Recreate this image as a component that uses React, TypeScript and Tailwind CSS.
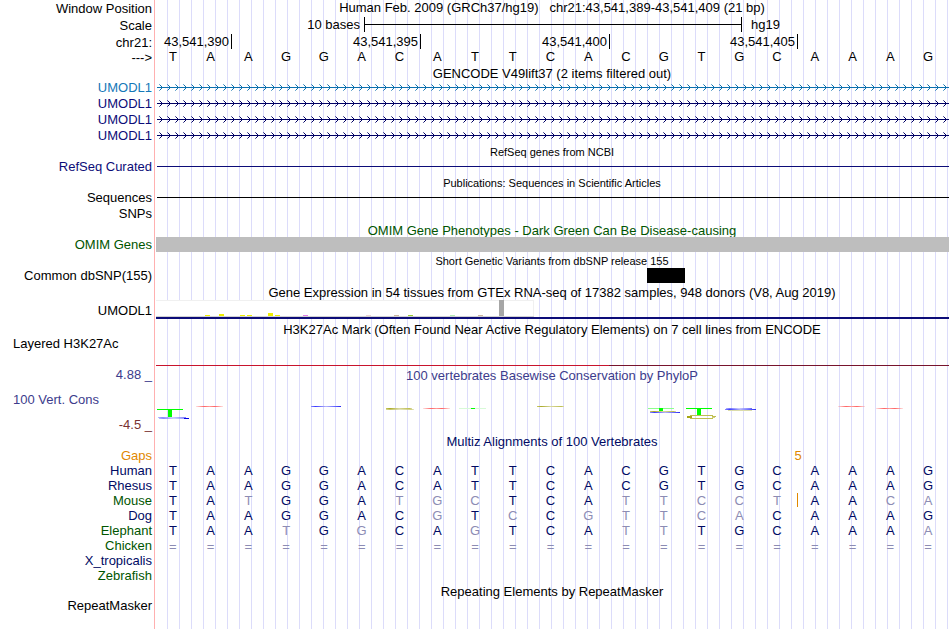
import React from 'react';

interface RowProps {
  label?: string;
  labelClass?: string;
  className?: string;
  children?: React.ReactNode;
}

interface Species {
  name: string;
  color: string;
  bases: string;
}

const REFERENCE = 'TAAGGACATTCACGTGCAAAG';

const NAVY = 'text-[#000a64]';
const GREEN = 'text-[#005500]';

const species: Species[] = [
  { name: 'Human', color: NAVY, bases: REFERENCE },
  { name: 'Rhesus', color: NAVY, bases: REFERENCE },
  { name: 'Mouse', color: GREEN, bases: 'TATGGATGCTCATTCCTAACA' },
  { name: 'Dog', color: NAVY, bases: 'TAAGGACGTCCGTTCACAAAG' },
  { name: 'Elephant', color: GREEN, bases: 'TAATGGCAGTCATTTGCAAAA' },
  { name: 'Chicken', color: GREEN, bases: '=====================' },
  { name: 'X_tropicalis', color: NAVY, bases: '' },
  { name: 'Zebrafish', color: GREEN, bases: '' },
];

const transcripts = [
  { id: 'tx1', stroke: '#0c70ae', text: 'text-[#1478b8]' },
  { id: 'tx2', stroke: '#000064', text: 'text-[#0c0c78]' },
  { id: 'tx3', stroke: '#000064', text: 'text-[#0c0c78]' },
  { id: 'tx4', stroke: '#000064', text: 'text-[#0c0c78]' },
];

// slot = tissue position, h = bar height
const tissues = [
  { slot: 7, h: 1, fill: '#eeee00' },
  { slot: 9, h: 2, fill: '#eeee00' },
  { slot: 12, h: 1, fill: '#eeee00' },
  { slot: 13, h: 1, fill: '#eeee00' },
  { slot: 16, h: 3, fill: '#eeee00' },
  { slot: 17, h: 1, fill: '#eeee00' },
  { slot: 21, h: 1, fill: '#e080e8' },
  { slot: 30, h: 1, fill: '#eed5d2' },
  { slot: 34, h: 1, fill: '#cdb79e' },
  { slot: 36, h: 1, fill: '#9acd32' },
  { slot: 42, h: 1, fill: '#b4eeb4' },
  { slot: 46, h: 1, fill: '#cdb79e' },
  { slot: 49, h: 16, fill: '#a6a6a6' },
];

const Row = ({ label, labelClass = '', className = '', children }: RowProps) => (
  <div className={`flex ${className}`}>
    <div className={`w-[154px] shrink-0 pr-[2px] text-right ${labelClass}`}>{label}</div>
    <div className="min-w-0 flex-1">{children}</div>
  </div>
);

const Title = ({ className = 'h-4 leading-[12px]', children }: { className?: string; children: React.ReactNode }) => (
  <div className={`ml-[154px] flex items-end justify-center whitespace-pre ${className}`}>
    <h2>{children}</h2>
  </div>
);

const Transcript = ({ id, stroke }: { id: string; stroke: string }) => (
  <svg className="h-4 w-full pr-px" shapeRendering="crispEdges" aria-hidden="true">
    <defs>
      <pattern id={id} x="1" y="0" width="8" height="16" patternUnits="userSpaceOnUse">
        <g fill={stroke}>
          <rect x="0" y="7" width="8" height="1" />
          <rect x="6" y="6" width="1" height="1" />
          <rect x="6" y="8" width="1" height="1" />
          <rect x="5" y="5" width="1" height="1" />
          <rect x="5" y="9" width="1" height="1" />
          <rect x="4" y="4" width="1" height="1" opacity="0.6" />
          <rect x="4" y="10" width="1" height="1" opacity="0.6" />
        </g>
      </pattern>
    </defs>
    <rect x="3" y="0" width="100%" height="16" fill={`url(#${id})`} />
  </svg>
);

const Expression = () => (
  <svg className="block h-[17px] w-[380px]" shapeRendering="crispEdges" aria-hidden="true">
    <rect x="2" y="0" width="378" height="17" fill="#f0f0f0" />
    <rect x="2" y="1" width="377" height="15" fill="#fff" />
    <rect x="2" y="16" width="378" height="1" fill="#d2d2d2" />
    {tissues.map((t) => (
      <rect key={t.slot} x={2 + t.slot * 7} y={16 - t.h} width="5" height={t.h} fill={t.fill} />
    ))}
  </svg>
);

// Squashed sequence logo of the PhyloP scores
const Conservation = () => (
  <svg className="block h-[51px] w-full" viewBox="154 382 796 51" preserveAspectRatio="none" aria-hidden="true">
    <defs>
      <linearGradient id="redFade">
        <stop offset="0" stopColor="#ff6464" stopOpacity="0.2" />
        <stop offset="0.3" stopColor="#ff6464" />
        <stop offset="0.5" stopColor="#ff9c9c" />
        <stop offset="0.7" stopColor="#ff6464" />
        <stop offset="1" stopColor="#ff6464" stopOpacity="0.2" />
      </linearGradient>
      <linearGradient id="blueFade">
        <stop offset="0" stopColor="#8c8cff" />
        <stop offset="0.15" stopColor="#3c3cff" />
        <stop offset="0.5" stopColor="#b4b4fa" />
        <stop offset="0.8" stopColor="#6464ff" />
        <stop offset="1" stopColor="#2828f0" />
      </linearGradient>
      <linearGradient id="oliveFade">
        <stop offset="0" stopColor="#c8c864" />
        <stop offset="0.15" stopColor="#aaaa28" />
        <stop offset="0.5" stopColor="#d8d8a0" />
        <stop offset="0.9" stopColor="#bebe50" />
        <stop offset="1" stopColor="#dcdcaa" />
      </linearGradient>
    </defs>
    <g shapeRendering="crispEdges">
      <rect x="157" y="409" width="26" height="1" fill="#00ff00" />
      <rect x="168" y="409" width="4" height="8" fill="#00ff00" />
      <rect x="158" y="417" width="28" height="1" fill="url(#blueFade)" opacity="0.6" />
      <rect x="159" y="418" width="30" height="1" fill="url(#blueFade)" opacity="0.6" />
      <rect x="184" y="418" width="5" height="1" fill="#0000e6" />

      <rect x="196" y="406" width="27" height="1" fill="url(#redFade)" />
      <rect x="311" y="406" width="30" height="1" fill="url(#blueFade)" />
      <rect x="386" y="408" width="26" height="1" fill="url(#oliveFade)" />
      <rect x="386" y="409" width="28" height="1" fill="url(#oliveFade)" opacity="0.7" />
      <rect x="423" y="408" width="27" height="1" fill="url(#redFade)" />
      <rect x="459" y="408" width="27" height="1" fill="#d7fad7" />
      <rect x="471" y="408" width="4" height="1" fill="#00ff00" />
      <rect x="537" y="406" width="27" height="1" fill="url(#oliveFade)" />

      <rect x="648" y="408" width="26" height="1" fill="#8cff8c" />
      <rect x="659" y="408" width="4" height="3" fill="#00ff00" />
      <rect x="650" y="411" width="26" height="1" fill="url(#oliveFade)" />
      <rect x="650" y="412" width="30" height="1" fill="url(#blueFade)" />

      <rect x="686" y="408" width="26" height="1" fill="#00ff00" />
      <rect x="697" y="408" width="4" height="7" fill="#00ff00" />
      <rect x="690" y="415" width="23" height="1" fill="#bebe50" />
      <rect x="687" y="416" width="5" height="2" fill="#a5a514" />
      <rect x="712" y="416" width="4" height="1" fill="#bebe50" />
      <rect x="712" y="417" width="3" height="1" fill="#d2d278" />
      <rect x="690" y="418" width="23" height="1" fill="#bebe50" />

      <rect x="726" y="408" width="26" height="1" fill="url(#blueFade)" opacity="0.7" />
      <rect x="725" y="409" width="31" height="1" fill="url(#blueFade)" />
      <rect x="728" y="410" width="24" height="1" fill="#dcdcaa" />
      <rect x="838" y="406" width="27" height="1" fill="url(#redFade)" />
      <rect x="876" y="408" width="27" height="1" fill="url(#redFade)" />
    </g>
  </svg>
);

const App: React.FC = () => (
  <main className="min-h-screen bg-white bg-[image:linear-gradient(to_right,transparent_154px,#ffb0b0_154px,#ffb0b0_155px,transparent_155px),repeating-linear-gradient(to_right,transparent_0px,transparent_11px,#dcdcfa_11px,#dcdcfa_12px)] bg-[position:0_0,156px_0] bg-no-repeat font-['Liberation_Sans',Arial,sans-serif] text-[13px] leading-[15px] text-black">
    {/* Position and scale */}
    <Row label="Window Position" labelClass="pt-px" className="h-4">
      <h1 className="text-center whitespace-pre">
        Human Feb. 2009 (GRCh37/hg19)   chr21:43,541,389-43,541,409 (21 bp)
      </h1>
    </Row>
    <Row label="Scale" labelClass="pt-[2px]" className="h-[17px]">
      <div className="grid grid-cols-[210fr_378fr_208fr] pt-px">
        <span className="pr-1 text-right">10 bases</span>
        <span className="flex items-center border-x border-black">
          <span className="h-px w-full bg-black" />
        </span>
        <span className="pl-[9px]">hg19</span>
      </div>
    </Row>
    <Row label="chr21:" labelClass="pt-[2px]" className="h-4">
      <div className="grid grid-cols-[78fr_189fr_189fr_188fr_152fr] pt-px text-right">
        {['43,541,390', '43,541,395', '43,541,400', '43,541,405'].map((pos) => (
          <span key={pos} className="border-r border-black pr-[2px]">{pos}</span>
        ))}
      </div>
    </Row>
    <Row label="--->" labelClass="pt-px" className="h-[15px]">
      <div className="grid grid-cols-[repeat(21,1fr)] pr-[3px] text-center">
        {REFERENCE.split('').map((base, i) => (
          <span key={i}>{base}</span>
        ))}
      </div>
    </Row>

    {/* Genes */}
    <Title>GENCODE V49lift37 (2 items filtered out)</Title>
    {transcripts.map((t) => (
      <Row key={t.id} label="UMODL1" labelClass={t.text} className="h-4">
        <Transcript id={t.id} stroke={t.stroke} />
      </Row>
    ))}
    <Title className="h-[15px] text-[11px] leading-[14px]">RefSeq genes from NCBI</Title>
    <Row label="RefSeq Curated" labelClass="text-[#0c0c78]" className="h-[15px]">
      <div className="mt-[7px] mr-px ml-[3px] h-px bg-[#0c0c78]" />
    </Row>

    {/* Literature and phenotypes */}
    <Title className="h-4 text-[11px] leading-[14px]">Publications: Sequences in Scientific Articles</Title>
    <Row label="Sequences" className="h-[15px]">
      <div className="mt-[7px] mr-px ml-[3px] h-px bg-black" />
    </Row>
    <Row label="SNPs" labelClass="pt-px" className="h-4" />
    <Title className={`h-4 leading-[12px] ${GREEN}`}>
      OMIM Gene Phenotypes - Dark Green Can Be Disease-causing
    </Title>
    <Row label="OMIM Genes" labelClass={GREEN} className="h-[15px]">
      <div className="relative mr-px ml-[2px] h-[15px] bg-[#bebebe]" />
    </Row>

    {/* Variants */}
    <Title className="h-4 text-[11px] leading-[14px]">Short Genetic Variants from dbSNP release 155</Title>
    <Row label="Common dbSNP(155)" className="h-[15px]">
      <div className="grid h-[15px] grid-cols-[493fr_38fr_265fr]">
        <span className="col-start-2 bg-black" />
      </div>
    </Row>

    {/* Expression and regulation */}
    <Title className="h-[17px] leading-[14px]">
      Gene Expression in 54 tissues from GTEx RNA-seq of 17382 samples, 948 donors (V8, Aug 2019)
    </Title>
    <Row label="UMODL1" labelClass="pt-[3px]" className="h-[19px]">
      <Expression />
      <div className="mr-px ml-[2px] h-[2px] bg-[#0c0c78]" />
    </Row>
    <Title className="h-[17px] leading-[12px]">
      H3K27Ac Mark (Often Found Near Active Regulatory Elements) on 7 cell lines from ENCODE
    </Title>
    <div className="flex h-[30px]">
      <div className="w-[154px] shrink-0 pl-[13px]">Layered H3K27Ac</div>
      <div className="mr-px ml-[2px] grid h-px flex-1 grid-cols-[453fr_340fr] self-end">
        <span className="bg-[#c8142d]" />
        <span className="bg-[#78142d]" />
      </div>
    </div>

    {/* Conservation */}
    <div className="flex h-[66px]">
      <div className="flex w-[154px] shrink-0 flex-col justify-between pt-px pr-[2px] text-right">
        <span className="text-[#3c3c8c]">4.88 _</span>
        <span className="pl-[13px] text-left text-[#3c3c8c]">100 Vert. Cons</span>
        <span className="text-[#783232]">-4.5 _</span>
      </div>
      <div className="min-w-0 flex-1">
        <h2 className="h-4 pt-[2px] text-center leading-4 text-[#3c3c8c]">
          100 vertebrates Basewise Conservation by PhyloP
        </h2>
        <Conservation />
      </div>
    </div>

    {/* Alignments */}
    <Title className={`h-4 leading-[12px] ${NAVY}`}>Multiz Alignments of 100 Vertebrates</Title>
    <Row label="Gaps" labelClass="text-[#e18700]" className="h-[15px]">
      <div className="grid grid-cols-[636fr_16fr_144fr] text-center text-[#e18700]">
        <span className="col-start-2">5</span>
      </div>
    </Row>
    <table className="block w-full">
      <tbody className="block">
        {species.map((s) => (
          <tr key={s.name} className="relative grid h-[15px] grid-cols-[154px_repeat(21,1fr)_3px]">
            <th scope="row" className={`pr-[2px] text-right font-normal ${s.color}`}>
              {s.name}
            </th>
            {s.bases.split('').map((base, i) => (
              <td
                key={i}
                className={`text-center ${base === REFERENCE[i] ? NAVY : 'text-[#8c8cb4]'} ${base === '=' ? 'pt-px' : ''}`}
              >
                {base}
                {s.name === 'Mouse' && i === 16 && (
                  <span className="absolute top-0 h-[14px] w-px translate-x-[16px] bg-[#e18700]" />
                )}
              </td>
            ))}
          </tr>
        ))}
      </tbody>
    </table>

    {/* Repeats */}
    <Title className="h-[15px] leading-[13px]">Repeating Elements by RepeatMasker</Title>
    <Row label="RepeatMasker" className="h-[15px]" />
  </main>
);

export default App;
